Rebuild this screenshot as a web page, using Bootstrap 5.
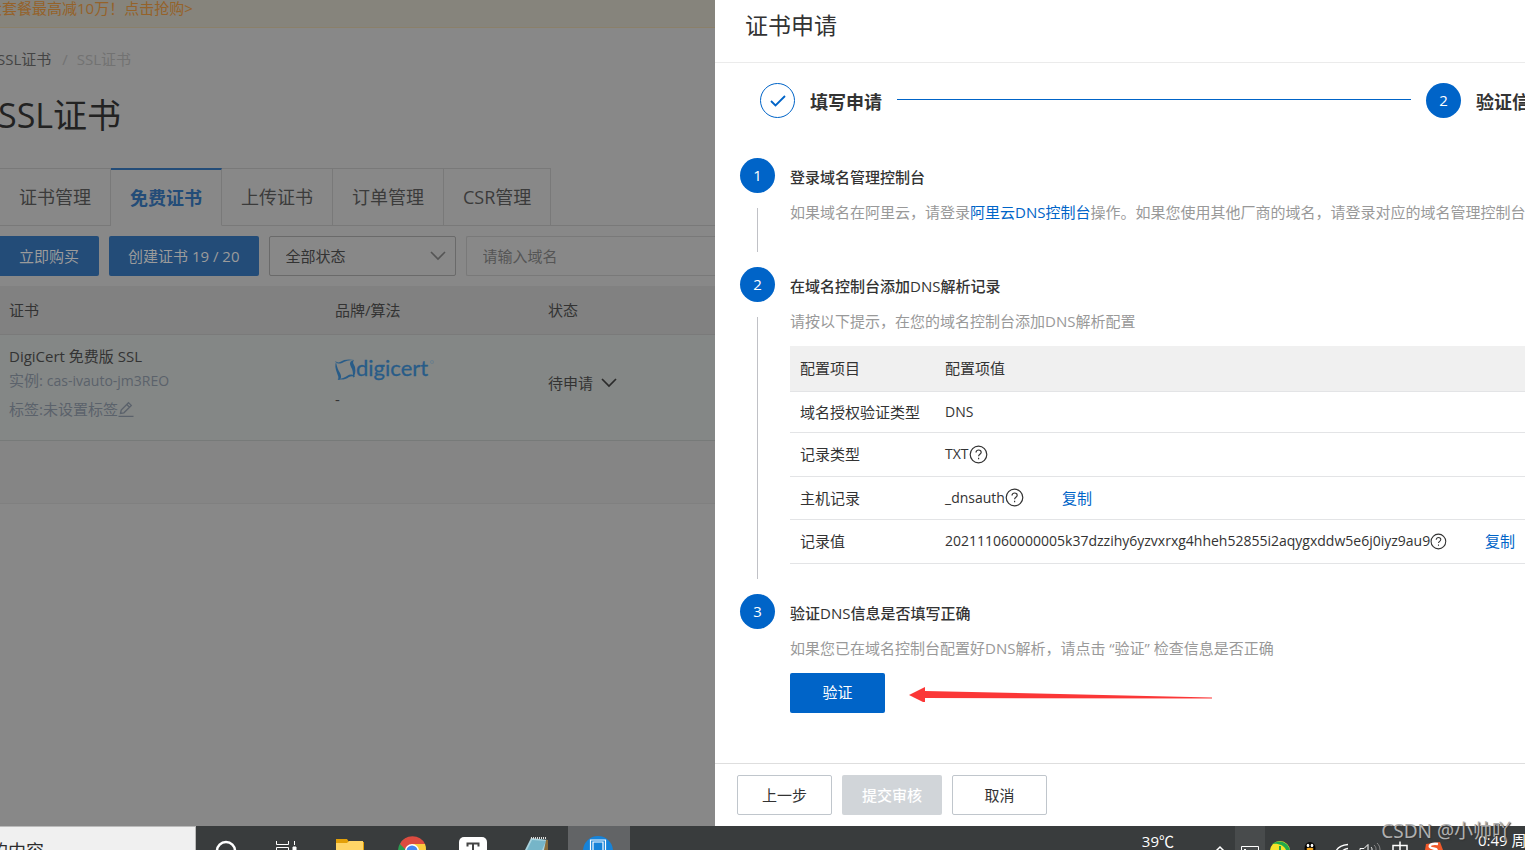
<!DOCTYPE html>
<html lang="zh-CN">
<head>
<meta charset="utf-8">
<meta name="viewport" content="width=device-width, initial-scale=1">
<title>SSL证书</title>
<link href="https://cdn.jsdelivr.net/npm/bootstrap@5.3.0/dist/css/bootstrap.min.css" rel="stylesheet">
<style>
  :root { --brand: #0064c8; --dim: #888888; --dim-line: #797979; --ink: #333; }
  body { font-family: "Open Sans", "Noto Sans CJK SC", sans-serif; font-size: 15px; line-height: 24px; color: var(--ink); background: var(--dim); }
  button, input, select { font-family: inherit; }
  a { text-decoration: none; }

  /* dimmed console page */
  .console { background: var(--dim); color: #333; }
  .promo { height: 28px; line-height: 16px; background: #86847c; border-bottom: 1px solid #8b8069; }
  .promo a { color: #95622a; margin-left: -13px; }
  .crumbs { height: 64px; padding-bottom: 2px; font-size: 15px; margin-left: -3px; }
  .crumbs a { color: #444; }
  .crumbs span { color: #727272; }
  .crumbs .sep { padding: 0 9px 0 11px; }
  .page-title { font-size: 34px; line-height: 46px; font-weight: 400; color: #222; margin: 0 0 30px -2px; }
  .console-tabs { border-bottom: 1px solid var(--dim-line); height: 58px; flex-wrap: nowrap; }
  .console-tabs .nav-link { height: 58px; padding: 0 19px; font-size: 18px; color: #3b3b3b; border: 0; border-top: 1px solid var(--dim-line); border-right: 1px solid var(--dim-line); border-bottom: 1px solid var(--dim-line); border-radius: 0; }
  .console-tabs .nav-link.active { color: #234c78; font-weight: 700; background: var(--dim); border-top: 2px solid #234c78; border-bottom-color: var(--dim); }
  .tools { gap: 10px; padding: 10px 0; }
  .tool { height: 40px; border-radius: 2px; font-size: 15px; padding: 0 20px; flex: none; }
  .tool-blue, .tool-blue:hover { background: #234c78; color: #9b9b9b; border: 0; }
  .tool-first { border-radius: 0 2px 2px 0; padding-left: 19px; }
  .tool-count { padding: 0 19px; }
  .status-box { width: 187px; padding: 0 16px; color: #333; border: 1px solid #6a6a6a; background: var(--dim) url("data:image/svg+xml,%3Csvg xmlns='http://www.w3.org/2000/svg' viewBox='0 0 16 10'%3E%3Cpath d='M1 1l7 7 7-7' fill='none' stroke='%23555' stroke-width='1.6'/%3E%3C/svg%3E") no-repeat right 9px center / 16px 10px; }
  .domain-box { flex: 1 1 0; min-width: 0; padding: 0 16px; border: 1px solid #797979; border-right: 0; border-radius: 2px 0 0 2px; background: var(--dim); }
  .domain-box::placeholder { color: #555; opacity: 1; }
  .certs { table-layout: fixed; width: 100%; }
  .certs th { height: 48px; padding: 0 9px; font-weight: 400; color: #333; background: #818181; border-bottom: 1px solid #7a7a7a; }
  .certs td { height: 106px; padding: 0 9px 9px; background: #848786; border-bottom: 1px solid #777a79; vertical-align: middle; }
  .certs .name-col { width: 326px; }
  .certs .brand-col { width: 213px; }
  .muted-blue { color: #5b626b; }
  .certs-foot { height: 63px; background: #858585; border-bottom: 1px solid #808080; }

  /* drawer */
  .drawer { flex: 0 0 810px; background: #fff; overflow: hidden; }
  .drawer-head { height: 63px; padding: 0 30px; border-bottom: 1px solid #ebebeb; }
  .drawer-head h2 { font-size: 23px; line-height: 50px; font-weight: 400; margin: 0; }
  .progress-steps { padding: 20px 0 0 45px; margin-right: -23px; white-space: nowrap; font-size: 18px; font-weight: 700; line-height: 38px; gap: 15px; }
  .progress-line { flex: 1; height: 1px; background: var(--brand); margin-top: 16px; }
  .dot { width: 35px; height: 35px; border-radius: 50%; background: var(--brand); color: #fff; font-size: 15px; font-weight: 400; line-height: 35px; text-align: center; flex: none; }
  .dot-done { background: #fff; border: 1px solid var(--brand); }
  .steps { padding: 37px 0 0 25px; margin: 0; list-style: none; flex: 1; }
  .steps li { display: flex; gap: 15px; }
  .rail { display: flex; flex-direction: column; align-items: center; gap: 15px; padding-bottom: 15px; }
  .rail i { width: 1px; flex: 1; background: #c0c1c6; }
  .step-body { flex: 1; min-width: 0; padding-bottom: 30px; }
  .step-body.roomy { padding-bottom: 39px; }
  .step-body h3 { font-size: 15px; line-height: 38px; font-weight: 500; margin: 0; }
  .step-body p { line-height: 32px; color: #999; margin: 0; white-space: nowrap; }
  .step-body a { color: var(--brand); }
  .records { width: 100%; margin-top: 9px; table-layout: fixed; }
  .records th, .records td { padding: 0 10px; border-bottom: 1px solid #e3e4e6; font-weight: 400; height: 44px; white-space: nowrap; }
  .records thead th { background: #f0f0f0; height: 45px; }
  .records .short-row > * { height: 41px; }
  .records .host-row > * { height: 43px; }
  .records .key-col { width: 145px; }
  .val { font-size: 14px; }
  .copy { margin-left: 38px; }
  .verify { padding-top: 9px; }
  .btn-flat { height: 40px; min-width: 95px; padding: 0 20px; font-size: 15px; border-radius: 2px; }
  .btn-go, .btn-go:hover { background: var(--brand); color: #fff; }
  .btn-line { border: 1px solid #c0c6cc; color: #333; background: #fff; }
  .btn-off:disabled { background: #d1d5d9; color: #fff; opacity: 1; border: 0; font-weight: 500; }
  .drawer-foot { border-top: 1px solid #dedede; padding: 11px 22px; gap: 10px; }

  /* desktop taskbar */
  .taskbar { height: 24px; background: #393c3d; overflow: hidden; color: #fff; }
  .find { width: 196px; height: 48px; border: 1px solid #bbb; border-left: 0; border-radius: 0; background: #f0f0f0; color: #2b2b2b; font-size: 18px; padding: 0; text-indent: -10px; flex: none; }
  .app { width: 62px; height: 24px; padding: 0; border: 0; background: none; }
  .app svg, .tray svg { display: block; }
  .app-on { background: #626466; }
  .tray { width: 30px; height: 24px; padding: 0; border: 0; background: none; color: #fff; }
  .tray-on { background: #484b4c; }
  .clock { width: 47px; margin-left: 33px; white-space: nowrap; line-height: 29px; }
  .temp { line-height: 31px; margin-right: 31px; }
  .stamp { position: absolute; right: 14px; bottom: 7px; font-family: "Noto Sans", "Noto Sans CJK SC", sans-serif; font-size: 19px; color: #b0b0b0; text-shadow: 1px 1px 1px #333; pointer-events: none; }
</style>
</head>
<body class="d-flex flex-column vh-100 overflow-hidden position-relative">
<div class="d-flex flex-grow-1 overflow-hidden">
  <main class="console flex-grow-1 overflow-hidden">
    <div class="promo text-nowrap"><a href="#">大套餐最高减10万！点击抢购&gt;</a></div>
    <nav class="crumbs d-flex align-items-center" aria-label="breadcrumb"><a href="#">SSL证书</a><span class="sep">/</span><span>SSL证书</span></nav>
    <h1 class="page-title">SSL证书</h1>
    <ul class="nav console-tabs">
      <li><a class="nav-link d-flex align-items-center" href="#">证书管理</a></li>
      <li><a class="nav-link d-flex align-items-center active" href="#">免费证书</a></li>
      <li><a class="nav-link d-flex align-items-center" href="#">上传证书</a></li>
      <li><a class="nav-link d-flex align-items-center" href="#">订单管理</a></li>
      <li><a class="nav-link d-flex align-items-center" href="#">CSR管理</a></li>
    </ul>
    <form class="tools d-flex">
      <button type="button" class="btn tool tool-blue tool-first">立即购买</button>
      <button type="button" class="btn tool tool-blue tool-count">创建证书 19 / 20</button>
      <select class="form-select tool status-box" aria-label="状态"><option>全部状态</option></select>
      <input class="tool domain-box" type="text" placeholder="请输入域名" aria-label="域名">
    </form>
    <table class="certs">
      <thead><tr><th class="name-col">证书</th><th class="brand-col">品牌/算法</th><th>状态</th></tr></thead>
      <tbody><tr>
        <td>
          <div>DigiCert 免费版 SSL</div>
          <div class="muted-blue">实例: <span class="val">cas-ivauto-jm3REO</span></div>
          <div class="muted-blue d-flex align-items-center mt-1">标签:未设置标签
            <svg width="16" height="16" viewBox="0 0 15 16" fill="none" stroke="currentColor" stroke-width="1.3"><path d="M2 12.500l.7-3.400L10 1.700l2.800 2.700L5.400 11.800zM8.300 3.500l2.700 2.700M0 15.300h15"/></svg>
          </div>
        </td>
        <td>
          <svg class="d-block mt-1 mb-1" width="99" height="24" viewBox="0 0 99 24" role="img" aria-label="digicert">
            <g fill="#285c88">
              <path d="M0 2c2 1 3 2 5 1C9 0 15 0 19 1c-5 0-9 1-12 3-3 1-5 1-7-2z"/>
              <path d="M19 1c-2 3 0 4 1 7 1 5 0 8-2 11 0-5 0-8-2-11-2-4-1-6 3-7z"/>
              <path d="M20 18c-2-1-4-1-6 0-4 3-8 3-12 2 5 0 8-2 10-3 3-2 7-2 8 1z"/>
              <path d="M3 21c1-3 0-4-1-7C0 9 0 6 1 3c1 5 2 8 4 11 2 4 1 7-2 7z"/>
            </g>
            <text x="21" y="17" font-family="Lato, sans-serif" font-size="22" fill="#285c88" stroke="#285c88" stroke-width=".3">digicert</text>
            <circle cx="97" cy="3" r="1.500" fill="none" stroke="#5b7a92" stroke-width=".6"/>
          </svg>
          <div>-</div>
        </td>
        <td><a href="#" class="text-reset d-inline-flex align-items-center">待申请
          <svg class="ms-2" width="16" height="10" viewBox="0 0 16 10" fill="none" stroke="#2b2b2b" stroke-width="1.700"><path d="M1 1l7 7 7-7"/></svg></a></td>
      </tr></tbody>
    </table>
    <div class="certs-foot"></div>
  </main>

  <aside class="drawer d-flex flex-column">
    <header class="drawer-head"><h2>证书申请</h2></header>
    <div class="progress-steps d-flex">
      <span class="dot dot-done d-flex align-items-center justify-content-center"><svg width="16" height="12" viewBox="0 0 16 12" fill="none" stroke="#0064c8" stroke-width="1.800"><path d="M1 6l4.500 4.500L15 1"/></svg></span>
      <span>填写申请</span>
      <span class="progress-line"></span>
      <span class="dot">2</span>
      <span>验证信息</span>
    </div>
    <ol class="steps">
      <li>
        <div class="rail"><span class="dot">1</span><i></i></div>
        <div class="step-body roomy">
          <h3>登录域名管理控制台</h3>
          <p>如果域名在阿里云，请登录<a href="#">阿里云DNS控制台</a>操作。如果您使用其他厂商的域名，请登录对应的域名管理控制台</p>
        </div>
      </li>
      <li>
        <div class="rail"><span class="dot">2</span><i></i></div>
        <div class="step-body">
          <h3>在域名控制台添加DNS解析记录</h3>
          <p>请按以下提示，在您的域名控制台添加DNS解析配置</p>
          <table class="records">
            <thead><tr><th class="key-col">配置项目</th><th>配置项值</th></tr></thead>
            <tbody>
              <tr class="short-row"><th>域名授权验证类型</th><td class="val">DNS</td></tr>
              <tr><th>记录类型</th><td><div class="d-flex align-items-center"><span class="val">TXT</span><svg width="19" height="19" viewBox="0 0 19 19" fill="none" stroke="#333" stroke-width="1.200"><circle cx="9.500" cy="9.500" r="8.300"/><path d="M7 7.500c0-3.400 5.200-3.200 5.200-.2 0 2-2.600 2-2.600 4M9.600 12.800v1.500"/></svg></div></td></tr>
              <tr class="host-row"><th>主机记录</th><td><div class="d-flex align-items-center"><span class="val">_dnsauth</span><svg width="19" height="19" viewBox="0 0 19 19" fill="none" stroke="#333" stroke-width="1.200"><circle cx="9.500" cy="9.500" r="8.300"/><path d="M7 7.500c0-3.400 5.200-3.200 5.200-.2 0 2-2.600 2-2.600 4M9.600 12.800v1.500"/></svg><a class="copy" href="#">复制</a></div></td></tr>
              <tr><th>记录值</th><td><div class="d-flex align-items-center"><span class="val">202111060000005k37dzzihy6yzvxrxg4hheh52855i2aqygxddw5e6j0iyz9au9</span><svg width="19" height="19" viewBox="0 0 19 19" fill="none" stroke="#333" stroke-width="1.200"><circle cx="9.500" cy="9.500" r="8.300"/><path d="M7 7.500c0-3.400 5.200-3.200 5.200-.2 0 2-2.600 2-2.600 4M9.600 12.800v1.500"/></svg><a class="copy" href="#">复制</a></div></td></tr>
            </tbody>
          </table>
        </div>
      </li>
      <li>
        <div class="rail"><span class="dot">3</span></div>
        <div class="step-body">
          <h3>验证DNS信息是否填写正确</h3>
          <p>如果您已在域名控制台配置好DNS解析，请点击 “验证” 检查信息是否正确</p>
          <div class="verify d-flex align-items-center">
            <button type="button" class="btn btn-flat btn-go">验证</button>
            <svg class="ms-4" width="303" height="18" viewBox="0 0 303 18"><path d="M0 11L16 3v4l287 6.500v1L16 14v5z" fill="#fb3737"/></svg>
          </div>
        </div>
      </li>
    </ol>
    <footer class="drawer-foot d-flex">
      <button type="button" class="btn btn-flat btn-line">上一步</button>
      <button type="button" class="btn btn-flat btn-off" disabled>提交审核</button>
      <button type="button" class="btn btn-flat btn-line">取消</button>
    </footer>
  </aside>
</div>

<div class="taskbar d-flex flex-shrink-0">
  <input class="find" type="text" value="的内容" aria-label="搜索">
  <button class="app" aria-label="Cortana"><svg width="62" height="24"><circle cx="30" cy="25" r="9" fill="none" stroke="#fff" stroke-width="2.500"/></svg></button>
  <button class="app" aria-label="任务视图"><svg width="62" height="24" fill="none" stroke="#fff"><path d="M18.500 15v3.500h12V15M18.500 24v-2.500h12V24M36.500 15v4" /><path d="M35 21h3v3h-3z" fill="#fff"/></svg></button>
  <button class="app" aria-label="文件资源管理器"><svg width="62" height="24"><path d="M16 13h11l2 3h15v8H16z" fill="#e3a008"/><path d="M16 17h11l2-2h14v9H16z" fill="#ffd567"/></svg></button>
  <button class="app" aria-label="Chrome"><svg width="62" height="24"><circle cx="30" cy="25" r="14" fill="#2c9c52"/><path d="M18 18a14 14 0 0 1 25 0H30v6h-6z" fill="#dd4b40"/><path d="M30 18h13a14 14 0 0 1 1 6H30z" fill="#fccb3e"/><circle cx="30" cy="25" r="7" fill="#fff"/><circle cx="30" cy="25" r="5.500" fill="#4688f1"/></svg></button>
  <button class="app" aria-label="Typora"><svg width="62" height="24"><rect x="15" y="11" width="28" height="28" rx="5" fill="#fff"/><path d="M23.500 20.500v-3h11v3M29 17.500V24" fill="none" stroke="#444" stroke-width="2"/></svg></button>
  <button class="app" aria-label="记事本"><svg width="62" height="24"><path d="M25 12l17 2v10H19z" fill="#a9d3de"/><path d="M26 14l14 1-4 9H21z" fill="#76b5c8"/><path d="M40 14h2v10h-4z" fill="#8a6d3b"/><path d="M25 12h16" stroke="#ddd" stroke-width="2" stroke-dasharray="1 1"/></svg></button>
  <button class="app app-on" aria-label="应用"><svg width="62" height="24"><circle cx="30" cy="25" r="15" fill="#1683d9"/><path d="M22.500 24V14h15v10M25 24v-8h10v8" fill="none" stroke="#fff" stroke-width="1.200"/></svg></button>
  <span class="temp ms-auto">39℃</span>
  <button class="tray" aria-label="展开"><svg width="30" height="24"><path d="M10 26l5-5 5 5" fill="none" stroke="#fff" stroke-width="1.500"/></svg></button>
  <button class="tray tray-on" aria-label="显示器"><svg width="30" height="24"><path d="M6.500 24v-3.500h17V24M9 23.500h2" fill="none" stroke="#fff"/></svg></button>
  <button class="tray" aria-label="安全卫士"><svg width="30" height="24"><circle cx="15" cy="25" r="10" fill="#f7e32a"/><path d="M7 18c5-4 15-4 18 6h-4c-2-5-8-7-14-6z" fill="#22a94b"/><path d="M15 20v4" stroke="#22a94b" stroke-width="2"/></svg></button>
  <button class="tray" aria-label="QQ"><svg width="30" height="24"><ellipse cx="15" cy="22" rx="5.500" ry="6" fill="#050505"/><ellipse cx="13" cy="19.500" rx="1.300" ry="1.800" fill="#fff"/><ellipse cx="17" cy="19.500" rx="1.300" ry="1.800" fill="#fff"/><ellipse cx="15" cy="23" rx="3.500" ry="1.300" fill="#f3a51c"/></svg></button>
  <button class="tray" aria-label="网络"><svg width="30" height="24" fill="none" stroke="#fff" stroke-width="1.300"><path d="M11 25c2-4 6-6 12-6.500M16 26c2-2 4-3 7-3.500"/></svg></button>
  <button class="tray" aria-label="音量"><svg width="30" height="24" fill="none" stroke="#fff"><path d="M5 24v-1.500h4l4-4V24M16 21c1 1 1 2 1 3"/><path d="M19 19c2 2 2 3 2 5M22 17c2 2 3 4 3 7" stroke="#888"/></svg></button>
  <button class="tray" aria-label="输入法 中"><svg width="30" height="24" fill="none" stroke="#fff" stroke-width="1.500"><path d="M8 24v-4.500h14V24M15 15.500V24"/></svg></button>
  <button class="tray" aria-label="搜狗输入法"><svg width="30" height="24"><path d="M11 18l14-2 3 8H10z" fill="#f1592a"/><path d="M23 18c-6-1-9 1-8 3s6 1 7 3" fill="none" stroke="#fff" stroke-width="2.500"/></svg></button>
  <span class="clock">0:49 周日</span>
</div>
<div class="stamp">CSDN @小帅吖</div>
<script src="https://cdn.jsdelivr.net/npm/bootstrap@5.3.0/dist/js/bootstrap.bundle.min.js"></script>
</body>
</html>
